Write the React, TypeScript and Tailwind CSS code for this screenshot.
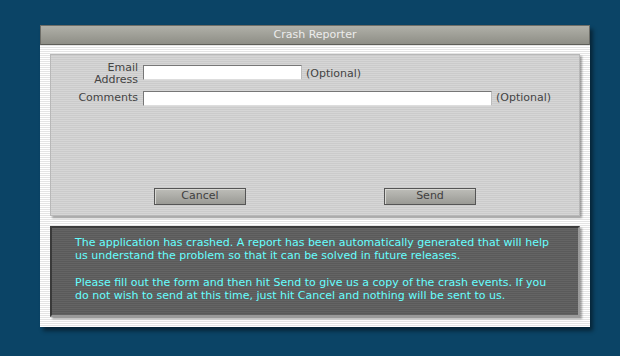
export default function App() {
  return (
    <div className="h-[356px] w-[620px] overflow-hidden bg-[#0b4466] pl-[40px] pt-[25px] font-['DejaVu_Sans',sans-serif] text-[11px]">
      <div className="w-[550px] shadow-[3px_4px_4px_rgba(0,0,0,0.45)]">
        {/* Title bar */}
        <div className="flex h-[20px] items-center justify-center border border-[#6e6e68] border-b-[#5e5e58] bg-[linear-gradient(#b0b0a8,#8e8e86)] text-[#ececec]">
          Crash Reporter
        </div>

        {/* Body */}
        <div className="flex flex-col gap-[10px] bg-[repeating-linear-gradient(0deg,#ffffff_0px,#ffffff_1px,#e4e4e4_1px,#e4e4e4_2px)] px-[10px] pb-[10px] pt-[9px]">
          {/* Form panel */}
          <div className="flex h-[162px] flex-col border border-[#b8b8b8] bg-[repeating-linear-gradient(0deg,#d6d6d6_0px,#d6d6d6_1px,#cbcbcb_1px,#cbcbcb_2px)] pt-[10px] shadow-[2px_2px_2px_rgba(0,0,0,0.35)]">
            <div className="flex items-start">
              <div className="-mt-[3px] w-[87px] text-right leading-[12px] text-[#444]">
                Email
                <br />
                Address
              </div>
              <div className="ml-[5px] h-[15px] w-[159px] border border-t-[#777] border-l-[#777] border-r-[#bbb] border-b-[#ddd] bg-white" />
              <span className="ml-[4px] mt-[1px] text-[#444]">(Optional)</span>
            </div>
            <div className="mt-[4px] flex items-center">
              <div className="w-[87px] text-right text-[#444]">Comments</div>
              <div className="ml-[5px] h-[15px] w-[349px] border border-t-[#777] border-l-[#777] border-r-[#bbb] border-b-[#ddd] bg-white" />
              <span className="ml-[4px] text-[#444]">(Optional)</span>
            </div>
            <div className="mt-auto mb-[10px] flex pl-[103px]">
              <button className="flex h-[17px] w-[92px] items-center justify-center border border-[#555] bg-[linear-gradient(#bdbdb8,#9a9a95)] text-[#404040] shadow-[inset_1px_1px_0_#d8d8d4]">
                Cancel
              </button>
              <button className="ml-[138px] flex h-[17px] w-[92px] items-center justify-center border border-[#555] bg-[linear-gradient(#bdbdb8,#9a9a95)] text-[#404040] shadow-[inset_1px_1px_0_#d8d8d4]">
                Send
              </button>
            </div>
          </div>

          {/* Message panel */}
          <div className="h-[91px] border-2 border-[#9a9a9a] border-t-[#3a3a3a] border-l-[#3a3a3a] bg-[repeating-linear-gradient(0deg,#646464_0px,#646464_1px,#5a5a5a_1px,#5a5a5a_2px)] pl-[23px] pt-[8px] leading-[13px] text-[#66ffff] shadow-[2px_2px_2px_rgba(0,0,0,0.35)]">
            <p>
              The application has crashed. A report has been automatically generated that will help
              <br />
              us understand the problem so that it can be solved in future releases.
            </p>
            <p className="mt-[14px]">
              Please fill out the form and then hit Send to give us a copy of the crash events. If you
              <br />
              do not wish to send at this time, just hit Cancel and nothing will be sent to us.
            </p>
          </div>
        </div>
      </div>
    </div>
  )
}
